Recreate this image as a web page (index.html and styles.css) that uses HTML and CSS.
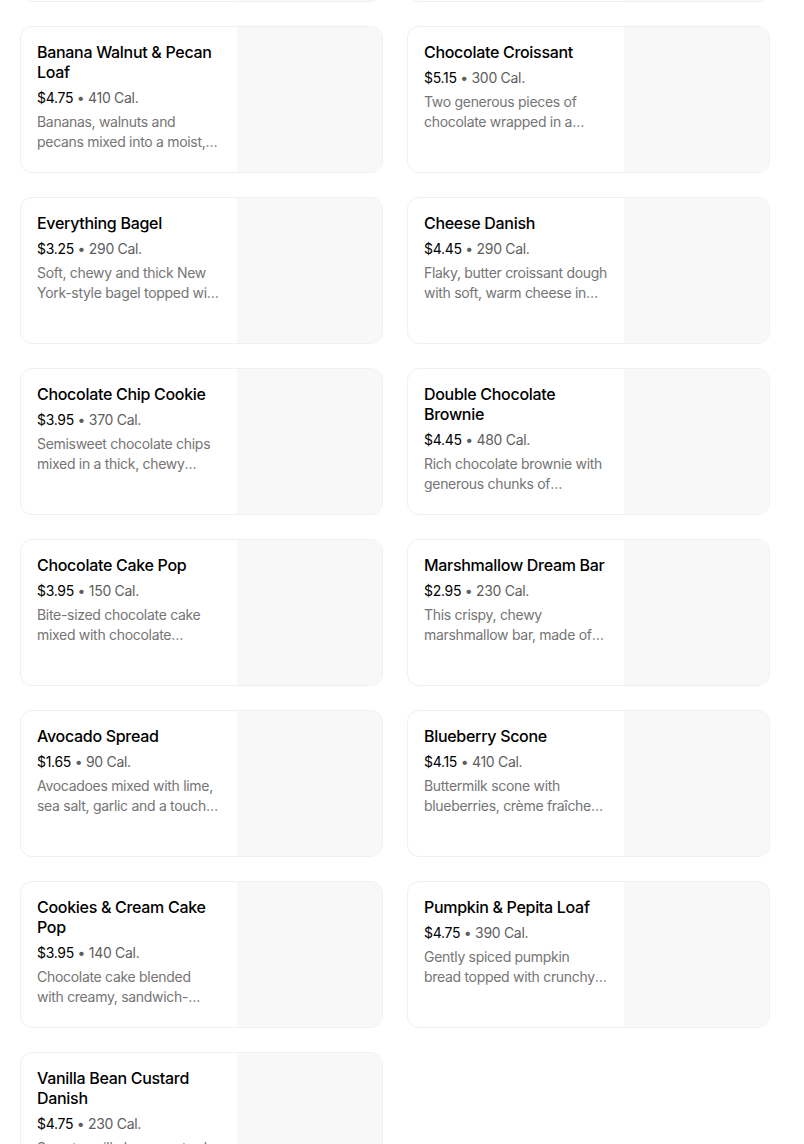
FILE: index.html
```html
<!DOCTYPE html>
<html>
<head>
<meta charset="utf-8">
<link rel="stylesheet" href="styles.css">
</head>
<body>
<div class="grid">
  <div class="card"><div class="info"></div><div class="img"></div></div>
  <div class="card"><div class="info"></div><div class="img"></div></div>

  <div class="card"><div class="info"><div class="title">Banana Walnut &amp; Pecan Loaf</div><div class="meta"><span class="price">$4.75</span> • 410 Cal.</div><div class="desc">Bananas, walnuts and pecans mixed into a moist, nutty loaf.</div></div><div class="img"></div></div>
  <div class="card"><div class="info"><div class="title">Chocolate Croissant</div><div class="meta"><span class="price">$5.15</span> • 300 Cal.</div><div class="desc">Two generous pieces of chocolate wrapped in a croissant.</div></div><div class="img"></div></div>

  <div class="card"><div class="info"><div class="title">Everything Bagel</div><div class="meta"><span class="price">$3.25</span> • 290 Cal.</div><div class="desc">Soft, chewy and thick New York-style bagel topped with sesame seeds.</div></div><div class="img"></div></div>
  <div class="card"><div class="info"><div class="title">Cheese Danish</div><div class="meta"><span class="price">$4.45</span> • 290 Cal.</div><div class="desc">Flaky, butter croissant dough with soft, warm cheese in the center.</div></div><div class="img"></div></div>

  <div class="card"><div class="info"><div class="title">Chocolate Chip Cookie</div><div class="meta"><span class="price">$3.95</span> • 370 Cal.</div><div class="desc">Semisweet chocolate chips mixed in a thick, chewy cookie.</div></div><div class="img"></div></div>
  <div class="card"><div class="info"><div class="title">Double Chocolate Brownie</div><div class="meta"><span class="price">$4.45</span> • 480 Cal.</div><div class="desc">Rich chocolate brownie with generous chunks of chocolate.</div></div><div class="img"></div></div>

  <div class="card"><div class="info"><div class="title">Chocolate Cake Pop</div><div class="meta"><span class="price">$3.95</span> • 150 Cal.</div><div class="desc">Bite-sized chocolate cake mixed with chocolate buttercream.</div></div><div class="img"></div></div>
  <div class="card"><div class="info"><div class="title">Marshmallow Dream Bar</div><div class="meta"><span class="price">$2.95</span> • 230 Cal.</div><div class="desc">This crispy, chewy marshmallow bar, made of crispy rice.</div></div><div class="img"></div></div>

  <div class="card"><div class="info"><div class="title">Avocado Spread</div><div class="meta"><span class="price">$1.65</span> • 90 Cal.</div><div class="desc">Avocadoes mixed with lime, sea salt, garlic and a touch of jalapeño.</div></div><div class="img"></div></div>
  <div class="card"><div class="info"><div class="title">Blueberry Scone</div><div class="meta"><span class="price">$4.15</span> • 410 Cal.</div><div class="desc">Buttermilk scone with blueberries, crème fraîche and lemon.</div></div><div class="img"></div></div>

  <div class="card"><div class="info"><div class="title">Cookies &amp; Cream Cake Pop</div><div class="meta"><span class="price">$3.95</span> • 140 Cal.</div><div class="desc">Chocolate cake blended with creamy, sandwich-cookie frosting.</div></div><div class="img"></div></div>
  <div class="card"><div class="info"><div class="title">Pumpkin &amp; Pepita Loaf</div><div class="meta"><span class="price">$4.75</span> • 390 Cal.</div><div class="desc">Gently spiced pumpkin bread topped with crunchy pepitas.</div></div><div class="img"></div></div>

  <div class="card"><div class="info"><div class="title">Vanilla Bean Custard Danish</div><div class="meta"><span class="price">$4.75</span> • 230 Cal.</div><div class="desc">Sweet vanilla bean custard in a flaky pastry.</div></div><div class="img"></div></div>
</div>
</body>
</html>
```

FILE: styles.css
```css
html, body {
  margin: 0;
  padding: 0;
  background: #ffffff;
}
body {
  font-family: Inter, "Noto Sans", Arial, sans-serif;
  color: #000;
  overflow: hidden;
}
.grid {
  display: grid;
  grid-template-columns: 363px 363px;
  column-gap: 24px;
  row-gap: 24px;
  padding-left: 20px;
  margin-top: -145px;
}
.card {
  display: flex;
  height: 145px;
  border: 1px solid #f0f0f0;
  border-radius: 12px;
  overflow: hidden;
  background: #fff;
}
.info {
  flex: 1;
  min-width: 0;
  padding: 15px 17px 16px 16px;
}
.img {
  width: 145px;
  flex: 0 0 145px;
  background: #f8f8f8;
}
.title {
  font-size: 16px;
  line-height: 20px;
  font-weight: 500;
  color: #000;
  letter-spacing: -0.3px;
}
.meta {
  margin-top: 6px;
  font-size: 14px;
  line-height: 20px;
  color: #5e5e5e;
  letter-spacing: -0.3px;
}
.price {
  color: #000;
}
.desc {
  margin-top: 4px;
  font-size: 14px;
  line-height: 20px;
  color: #757575;
  letter-spacing: -0.3px;
  display: -webkit-box;
  -webkit-line-clamp: 2;
  -webkit-box-orient: vertical;
  overflow: hidden;
}
```
